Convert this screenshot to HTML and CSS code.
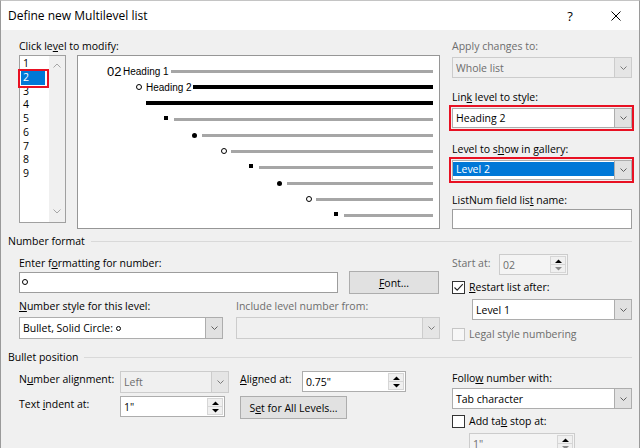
FILE: index.html
```html
<!DOCTYPE html>
<html>
<head>
<meta charset="utf-8">
<link rel="stylesheet" href="styles.css">
</head>
<body>
<div class="dialog">
  <header class="titlebar">
    <span class="title">Define new Multilevel list</span>
    <span class="tb-btn help">?</span>
    <span class="tb-btn close"><svg width="10" height="10" viewBox="0 0 10 10"><path d="M0.5 0.5L9.5 9.5M9.5 0.5L0.5 9.5" stroke="#000" stroke-width="1" fill="none"/></svg></span>
  </header>

  <main class="content">
    <section class="top">
      <div class="top-left">
        <div class="label">Click le<u>v</u>el to modify:</div>
        <div class="level-area">
          <div class="levels">
            <ul class="level-items">
              <li>1</li>
              <li class="sel">2</li>
              <li>3</li>
              <li>4</li>
              <li>5</li>
              <li>6</li>
              <li>7</li>
              <li>8</li>
              <li>9</li>
            </ul>
            <div class="vscroll">
              <svg width="8" height="5" viewBox="0 0 8 5"><path d="M0.5 4.5L4 1L7.5 4.5" fill="none" stroke="#a6a6a6"/></svg>
              <svg width="8" height="5" viewBox="0 0 8 5"><path d="M0.5 0.5L4 4L7.5 0.5" fill="none" stroke="#a6a6a6"/></svg>
            </div>
          </div>
          <div class="preview">
            <div class="prow p1"><span class="pnum">02</span><span class="ptxt">Heading 1</span><span class="bar h1bar"></span></div>
            <div class="prow p2"><span class="circ"></span><span class="ptxt">Heading 2</span><span class="bar blk h2bar"></span></div>
            <div class="prow p3"><span class="bar blk"></span></div>
            <div class="prow p4"><span class="sq"></span><span class="bar"></span></div>
            <div class="prow p5"><span class="dot"></span><span class="bar"></span></div>
            <div class="prow p6"><span class="circ"></span><span class="bar"></span></div>
            <div class="prow p7"><span class="sq"></span><span class="bar"></span></div>
            <div class="prow p8"><span class="dot"></span><span class="bar"></span></div>
            <div class="prow p9"><span class="circ"></span><span class="bar"></span></div>
            <div class="prow p10"><span class="sq"></span><span class="bar"></span></div>
          </div>
        </div>
      </div>

      <div class="top-right">
        <div class="label dis">Apply changes to:</div>
        <div class="sel-box disabled mt3">
          <span class="sel-val">Whole list</span>
          <span class="sel-btn"><svg width="7" height="4" viewBox="0 0 7 4"><path d="M0.5 0.5L3.5 3.5L6.5 0.5" fill="none" stroke="#7a7a7a"/></svg></span>
        </div>
        <div class="label mt11">Lin<u>k</u> level to style:</div>
        <div class="redbox">
          <div class="sel-box h20">
            <span class="sel-val">Heading 2</span>
            <span class="sel-btn"><svg width="7" height="4" viewBox="0 0 7 4"><path d="M0.5 0.5L3.5 3.5L6.5 0.5" fill="none" stroke="#606060"/></svg></span>
          </div>
        </div>
        <div class="label mt10">Level to s<u>h</u>ow in gallery:</div>
        <div class="redbox">
          <div class="sel-box h20">
            <span class="sel-val hl"><span class="hl-bar">Level 2</span></span>
            <span class="sel-btn"><svg width="7" height="4" viewBox="0 0 7 4"><path d="M0.5 0.5L3.5 3.5L6.5 0.5" fill="none" stroke="#606060"/></svg></span>
          </div>
        </div>
        <div class="label mt9">ListNum field lis<u>t</u> name:</div>
        <div class="text-input mt1 h20"></div>
      </div>
    </section>

    <div class="group"><span>Number format</span><span class="gline"></span></div>

    <section class="numfmt">
      <div class="nf-left">
        <div class="label mt6">Enter f<u>o</u>rmatting for number:</div>
        <div class="row-input">
          <div class="text-input fmt"><span class="mini-circ"></span></div>
          <div class="btn font-btn"><span><u>F</u>ont...</span></div>
        </div>
        <div class="grid2">
          <div class="label"><u>N</u>umber style for this level:</div>
          <div class="label dis">Include level number from:</div>
          <div class="sel-box h22">
            <span class="sel-val">Bullet, Solid Circle: <span class="mini-circ sm"></span></span>
            <span class="sel-btn"><svg width="7" height="4" viewBox="0 0 7 4"><path d="M0.5 0.5L3.5 3.5L6.5 0.5" fill="none" stroke="#606060"/></svg></span>
          </div>
          <div class="sel-box disabled h22">
            <span class="sel-val"></span>
            <span class="sel-btn"><svg width="7" height="4" viewBox="0 0 7 4"><path d="M0.5 0.5L3.5 3.5L6.5 0.5" fill="none" stroke="#7a7a7a"/></svg></span>
          </div>
        </div>
      </div>

      <div class="nf-right">
        <div class="start-row">
          <div class="label dis start-lbl">Start at:</div>
          <div class="spin disabled start-spin">
            <span class="spin-val">02</span>
            <span class="spin-btns">
              <span><svg width="7" height="4" viewBox="0 0 7 4"><path d="M0 4L3.5 0.5L7 4Z" fill="#000"/></svg></span>
              <span><svg width="7" height="4" viewBox="0 0 7 4"><path d="M0 0L3.5 3.5L7 0Z" fill="#8a8a8a"/></svg></span>
            </span>
          </div>
        </div>
        <div class="cb-row mt4">
          <span class="cb"><svg width="11" height="11" viewBox="0 0 11 11"><path d="M1.5 5.5L4.2 8.2L9.8 2.2" fill="none" stroke="#222" stroke-width="1.1"/></svg></span>
          <span class="cb-text"><u>R</u>estart list after:</span>
        </div>
        <div class="sel-box level1">
          <span class="sel-val">Level 1</span>
          <span class="sel-btn"><svg width="7" height="4" viewBox="0 0 7 4"><path d="M0.5 0.5L3.5 3.5L6.5 0.5" fill="none" stroke="#606060"/></svg></span>
        </div>
        <div class="cb-row mt6">
          <span class="cb disabled"></span>
          <span class="cb-text dis">Legal style numbering</span>
        </div>
      </div>
    </section>

    <div class="group bp"><span>Bullet position</span><span class="gline"></span></div>

    <section class="bullet">
      <div class="bp-grid">
        <div class="label">N<u>u</u>mber alignment:</div>
        <div class="sel-box disabled h22 align-sel">
          <span class="sel-val">Left</span>
          <span class="sel-btn"><svg width="7" height="4" viewBox="0 0 7 4"><path d="M0.5 0.5L3.5 3.5L6.5 0.5" fill="none" stroke="#7a7a7a"/></svg></span>
        </div>
        <div class="label"><u>A</u>ligned at:</div>
        <div class="spin">
          <span class="spin-val">0.75"</span>
          <span class="spin-btns">
            <span><svg width="7" height="4" viewBox="0 0 7 4"><path d="M0 4L3.5 0.5L7 4Z" fill="#000"/></svg></span>
            <span><svg width="7" height="4" viewBox="0 0 7 4"><path d="M0 0L3.5 3.5L7 0Z" fill="#000"/></svg></span>
          </span>
        </div>

        <div class="label">Text <u>i</u>ndent at:</div>
        <div class="spin indent-spin">
          <span class="spin-val">1"</span>
          <span class="spin-btns">
            <span><svg width="7" height="4" viewBox="0 0 7 4"><path d="M0 4L3.5 0.5L7 4Z" fill="#000"/></svg></span>
            <span><svg width="7" height="4" viewBox="0 0 7 4"><path d="M0 0L3.5 3.5L7 0Z" fill="#000"/></svg></span>
          </span>
        </div>
        <div class="btn setall"><span>S<u>e</u>t for All Levels...</span></div>
      </div>

      <div class="bp-right">
        <div class="label mt5">Follo<u>w</u> number with:</div>
        <div class="sel-box mt2">
          <span class="sel-val">Tab character</span>
          <span class="sel-btn"><svg width="7" height="4" viewBox="0 0 7 4"><path d="M0.5 0.5L3.5 3.5L6.5 0.5" fill="none" stroke="#606060"/></svg></span>
        </div>
        <div class="cb-row mt4">
          <span class="cb"></span>
          <span class="cb-text">Add ta<u>b</u> stop at:</span>
        </div>
        <div class="spin disabled tab-spin">
          <span class="spin-val">1"</span>
          <span class="spin-btns">
            <span><svg width="7" height="4" viewBox="0 0 7 4"><path d="M0 4L3.5 0.5L7 4Z" fill="#000"/></svg></span>
            <span><svg width="7" height="4" viewBox="0 0 7 4"><path d="M0 0L3.5 3.5L7 0Z" fill="#8a8a8a"/></svg></span>
          </span>
        </div>
      </div>
    </section>
  </main>
</div>
</body>
</html>
```

FILE: styles.css
```css
* { box-sizing: border-box; }
html, body { margin: 0; padding: 0; }
body {
  width: 640px;
  height: 448px;
  overflow: hidden;
  background: #f0f0f0;
  font-family: "Open Sans", "Noto Sans", sans-serif;
  font-size: 10.5px;
  color: #000;
}
u { text-decoration: underline; text-underline-offset: 1px; }

.dialog {
  width: 640px;
  height: 448px;
  border: 1px solid #9a9a9a;
  border-bottom: none;
  border-top-color: #c4c4c4;
  background: #f0f0f0;
  overflow: hidden;
}

/* title bar */
.titlebar {
  height: 29px;
  background: #fff;
  display: flex;
  align-items: center;
}
.title { flex: 1; padding-left: 7px; font-size: 12px; }
.tb-btn {
  width: 46px;
  height: 29px;
  display: flex;
  align-items: center;
  justify-content: center;
}
.help { font-size: 13px; }

/* content */
.content { padding: 8px 7px 0 7px; }
.label { height: 16px; line-height: 16px; white-space: nowrap; }
.dis { color: #6d6d6d; }
.mt1 { margin-top: 1px; }
.mt2 { margin-top: 2px; }
.mt3 { margin-top: 3px; }
.mt4 { margin-top: 4px; }
.mt5 { margin-top: 5px; }
.mt6 { margin-top: 6px; }
.mt9 { margin-top: 9px; }
.mt10 { margin-top: 10px; }
.mt11 { margin-top: 11px; }

.top { display: flex; padding-left: 11px; }
.top-left { width: 421px; }
.top-right { width: 180px; margin-left: 12px; }

.level-area { display: flex; align-items: flex-start; margin-top: 1px; }
.levels {
  width: 47px;
  height: 168px;
  border: 1px solid #a0a0a0;
  background: #fff;
  display: flex;
}
.level-items {
  list-style: none;
  margin: 0;
  padding: 1px 0 0 1px;
  width: 29px;
}
.level-items li {
  height: 13.75px;
  line-height: 13.75px;
  padding-left: 2px;
}
.level-items li.sel {
  width: 24px;
  background: #0078d7;
  color: #fff;
  position: relative;
}
.level-items li.sel::after {
  content: "";
  position: absolute;
  left: -3px;
  top: -2px;
  right: -4px;
  bottom: -3px;
  border: 2px solid #e81123;
}
.vscroll {
  width: 16px;
  margin-left: auto;
  background: #f0f0f0;
  display: flex;
  flex-direction: column;
  justify-content: space-between;
  align-items: center;
  padding: 7px 0 8px;
}

/* preview */
.preview {
  width: 363px;
  height: 174px;
  margin-left: 11px;
  border: 1px solid #969696;
  background: #fff;
  padding: 7px 6px 0 0;
}
.prow { display: flex; align-items: center; height: 16px; }
.bar { flex: 1; height: 3px; background: #a6a6a6; }
.bar.blk { height: 4px; background: #000; }
.pnum {
  font-family: "Liberation Sans", Arial, sans-serif;
  font-size: 13px;
  width: 15px;
  flex: none;
}
.ptxt {
  font-family: "Liberation Sans", Arial, sans-serif;
  font-size: 10px;
  margin-left: 1px;
  flex: none;
}
.h1bar { margin-left: 2px; }
.h2bar { margin-left: 1px; }
.circ {
  width: 6px;
  height: 6px;
  border: 1px solid #000;
  border-radius: 50%;
  margin-right: 4px;
  flex: none;
}
.p2 .circ { margin-right: 3px; }
.sq {
  width: 4px;
  height: 4px;
  background: #000;
  margin-right: 6px;
  margin-bottom: 3px;
  flex: none;
}
.dot {
  width: 5px;
  height: 5px;
  border-radius: 50%;
  background: #000;
  margin-right: 5px;
  flex: none;
}
.p1 { padding-left: 29px; }
.p2 { padding-left: 58px; }
.p3 { padding-left: 68px; }
.p4 { padding-left: 86px; }
.p5 { padding-left: 114px; }
.p6 { padding-left: 143px; }
.p7 { padding-left: 171px; }
.p8 { padding-left: 199px; }
.p9 { padding-left: 228px; }
.p10 { padding-left: 256px; }

/* controls */
.sel-box {
  display: flex;
  height: 21px;
  border: 1px solid #adadad;
  background: #fff;
}
.sel-box.h20 { height: 20px; }
.sel-box.h22 { height: 22px; }
.sel-val {
  flex: 1;
  padding-left: 3px;
  display: flex;
  align-items: center;
  white-space: nowrap;
  overflow: hidden;
}
.sel-btn {
  width: 17px;
  background: #e1e1e1;
  border-left: 1px solid #adadad;
  display: flex;
  align-items: center;
  justify-content: center;
  flex: none;
}
.sel-box.disabled { background: #f0f0f0; border-color: #cccccc; color: #6d6d6d; }
.sel-box.disabled .sel-btn { background: #e5e5e5; border-left-color: #cccccc; }

.sel-val.hl { padding: 1px 0 3px 0; align-items: stretch; }
.hl-bar {
  flex: 1;
  background: #0078d7;
  color: #fff;
  padding-left: 3px;
  display: flex;
  align-items: center;
}

.redbox {
  margin: 0 -2px 0 -3px;
  border: 2px solid #e81123;
  padding: 1px 0 1px 1px;
}

.text-input {
  height: 21px;
  border: 1px solid #9d9d9d;
  background: #fff;
}
.text-input.h20 { height: 20px; }

.mini-circ {
  display: inline-block;
  width: 6px;
  height: 6px;
  border: 1px solid #000;
  border-radius: 50%;
}
.mini-circ.sm { width: 5px; height: 5px; margin-left: 3px; margin-top: 1px; }

/* group headers */
.group {
  display: flex;
  align-items: center;
  height: 16px;
  margin-top: 4px;
  white-space: nowrap;
}
.group.bp { margin-top: 7px; }
.gline { flex: 1; height: 1px; background: #d9d9d9; margin-left: 6px; margin-top: 1px; }

/* number format */
.numfmt { display: flex; padding-left: 11px; }
.nf-left { width: 421px; }
.nf-right { width: 180px; margin-left: 12px; }
.row-input { display: flex; align-items: center; height: 23px; }
.text-input.fmt {
  width: 319px;
  display: flex;
  align-items: center;
  padding-left: 2px;
  padding-bottom: 2px;
}
.btn {
  height: 23px;
  border: 1px solid #adadad;
  background: #e1e1e1;
  display: flex;
  align-items: center;
  justify-content: center;
  white-space: nowrap;
}
.font-btn { width: 90px; margin-left: 11px; }
.grid2 {
  display: grid;
  grid-template-columns: 204px 204px;
  column-gap: 13px;
  row-gap: 3px;
  margin-top: 4px;
}

.start-row { display: flex; align-items: flex-start; margin-top: 5px; }
.start-lbl { width: 47px; margin-top: 1px; }
.start-spin { width: 69px; }

.spin {
  display: flex;
  height: 21px;
  border: 1px solid #adadad;
  background: #fff;
}
.spin.disabled { background: #f4f4f4; border-color: #cccccc; color: #6d6d6d; }
.spin-val { flex: 1; padding-left: 3px; display: flex; align-items: center; white-space: nowrap; }
.spin-btns {
  width: 17px;
  display: flex;
  flex-direction: column;
  padding: 1px 1px 1px 0;
}
.spin-btns span {
  flex: 1;
  display: flex;
  align-items: center;
  justify-content: center;
  background: #f0f0f0;
  border: 1px solid #d6d6d6;
}
.spin-btns span + span { border-top: none; }

.cb-row { display: flex; align-items: center; height: 16px; }
.cb {
  width: 13px;
  height: 13px;
  border: 1px solid #333;
  background: #fff;
  display: flex;
  align-items: center;
  justify-content: center;
  flex: none;
}
.cb.disabled { border-color: #c6c6c6; background: #f7f7f7; }
.cb-text { margin-left: 4px; white-space: nowrap; }
.level1 { width: 160px; margin-left: 20px; margin-top: 4px; }

/* bullet position */
.bullet { display: flex; padding-left: 11px; margin-top: 6px; }
.bp-grid {
  width: 387px;
  display: grid;
  grid-template-columns: 101px 120px 62px 104px;
  grid-template-rows: 22px 23px;
  row-gap: 3px;
  align-items: start;
}
.align-sel { width: 109px; }
.indent-spin { width: 105px; }
.setall { width: 107px; }
.bp-right { width: 180px; margin-left: auto; margin-top: -6px; }
.tab-spin { width: 106px; margin-left: 17px; margin-top: 4px; }
```
